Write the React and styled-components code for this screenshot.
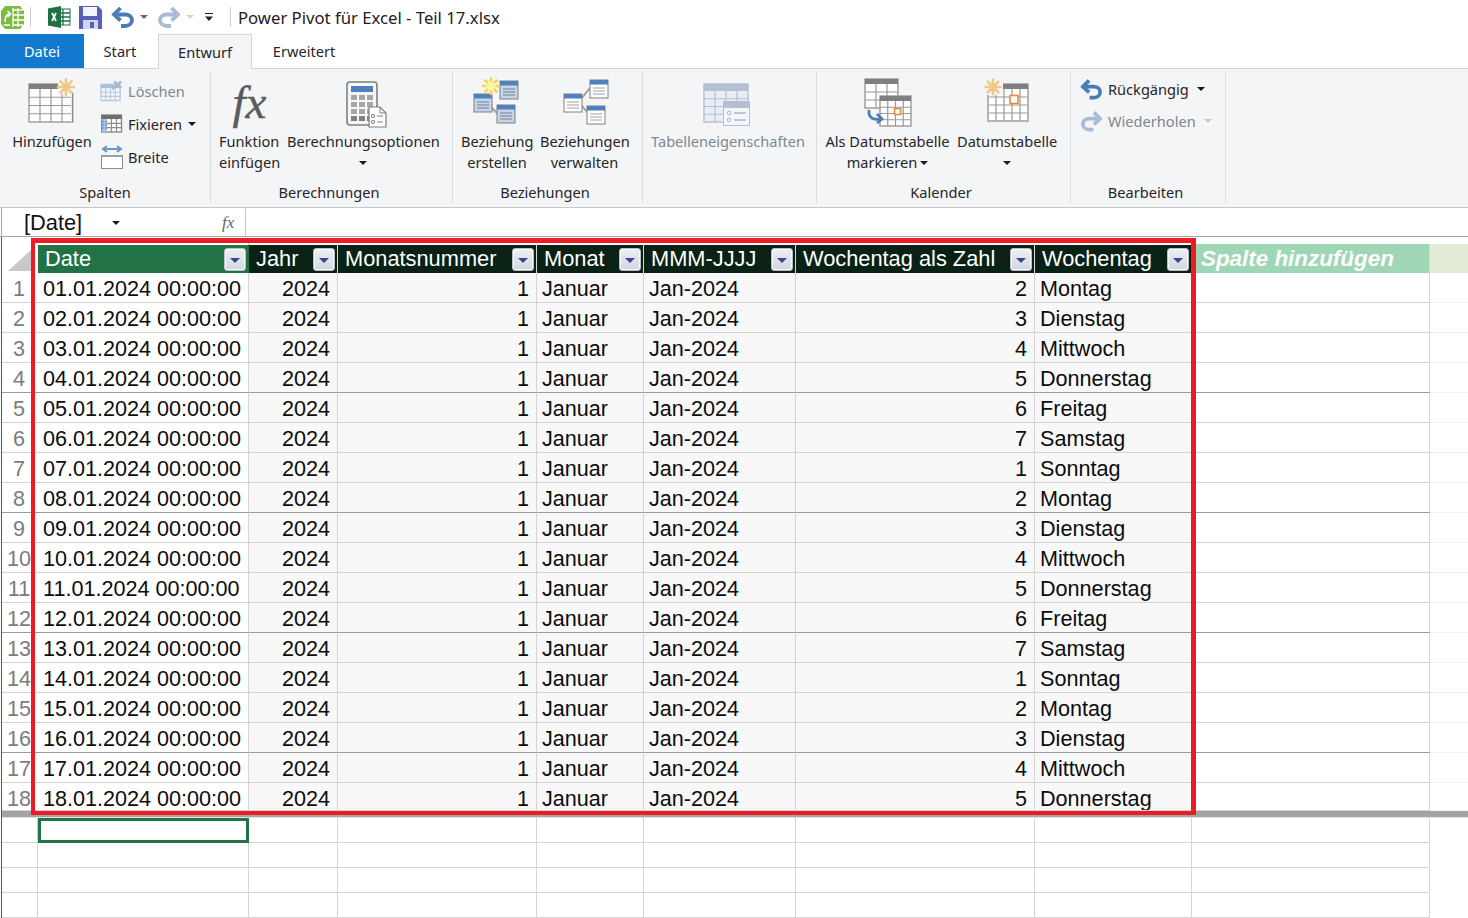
import React from 'react';
import styled, { createGlobalStyle } from 'styled-components';

const Global = createGlobalStyle`
  html, body { margin: 0; padding: 0; background: #fff; overflow: hidden; }
  * { box-sizing: border-box; }
`;
const UI = `"Noto Sans", "Open Sans", sans-serif`;
const GRID = `"Liberation Sans", Arial, sans-serif`;
const COLS = '36px 211px 89px 199px 107px 152px 239px 157px 238px 1fr';

const Page = styled.div`position: relative; width: 1468px; height: 918px; overflow: hidden; background: #fff; font-family: ${UI}; color: #262626;`;

const TitleBar = styled.div`height: 34px; display: flex; align-items: center;`;
const QatIcon = styled.span`display: flex; align-items: center; justify-content: center; width: ${p => p.$w}px; height: 34px; margin-left: ${p => p.$ml || 0}px;`;
const QatSep = styled.span`width: 1px; height: 20px; background: #d0d0d0; margin-left: ${p => p.$ml}px;`;
const Title = styled.span`font-size: 16.7px; margin-left: 7px; white-space: nowrap; color: #222;`;

const Tabs = styled.div`height: 35px; display: flex; border-bottom: 1px solid #d4d4d4;`;
const FileTab = styled.div`width: 84px; height: 34px; background: #1279ce; color: #fff; font-size: 14.6px; display: flex; align-items: center; justify-content: center;`;
const Tab = styled.div`
  width: ${p => p.$w}px; height: 35px; font-size: 14.6px; display: flex; align-items: center; justify-content: center; padding: 0 ${p => p.$pr || 0}px 1px 0;
  ${p => p.$active && 'background: #f4f5f7; border: 1px solid #d4d4d4; border-bottom: none;'}
`;

const Ribbon = styled.div`height: 139px; background: #f4f5f7; display: flex; padding-top: 3px; border-bottom: 1px solid #c8c8c8;`;
const Group = styled.div`
  width: ${p => p.$w}px; height: 131px; flex: none; border-right: 1px solid #dcdde0; display: flex; flex-direction: column;
`;
const GroupBody = styled.div`height: 109px; display: flex; gap: ${p => p.$gap ?? 7}px; padding-left: ${p => p.$pl ?? 8}px; padding-top: 3px;`;
const GroupLabel = styled.div`height: 22px; line-height: 22px; font-size: 14.6px; text-align: center; padding-right: ${p => p.$pr ?? 5}px; white-space: nowrap;`;
const BigBtn = styled.div`width: ${p => p.$w}px; flex: none; display: flex; flex-direction: column; align-items: stretch; color: ${p => p.$off ? '#80878f' : '#262626'};`;
const BigIcon = styled.div`height: 56px; display: flex; align-items: flex-start; justify-content: center; padding-left: ${p => p.$pl || 0}px; padding-top: ${p => p.$pt || 0}px;`;
const BigText = styled.div`font-size: 14.6px; line-height: 21px; text-align: ${p => p.$left ? 'left' : 'center'}; white-space: nowrap; `;
const SmallCol = styled.div`display: flex; flex-direction: column; margin-left: ${p => p.$ml || 0}px; margin-top: ${p => p.$mt || 0}px;`;
const SmallBtn = styled.div`height: ${p => p.$h || 33}px; display: flex; align-items: center; gap: 5px; font-size: 14.6px; white-space: nowrap; color: ${p => p.$off ? '#80878f' : '#262626'};`;
const SmallIcon = styled.span`width: 23px; height: 24px; display: flex; align-items: center; justify-content: center;`;
const Caret = styled.span`
  display: inline-block; width: 0; height: 0; margin-left: ${p => p.$ml ?? 0}px; vertical-align: 3px;
  border-left: 4px solid transparent; border-right: 4px solid transparent; border-top: 4px solid ${p => p.$off ? '#c4c8cc' : '#1a1a1a'};
`;
const FxGlyph = styled.span`font-family: "Liberation Serif", serif; font-style: italic; font-size: 47px; line-height: 44px; color: #5a5a5a; letter-spacing: 0; -webkit-text-stroke: .4px #5a5a5a;`;

const FormulaBar = styled.div`height: 29px; display: flex; border-bottom: 1px solid #a6a6a6;`;
const NameBox = styled.div`
  width: 245px; margin-left: 1px; border-left: 1px solid #a6a6a6; border-right: 1px solid #c6c6c6; display: flex; align-items: center;
  font-family: ${GRID}; font-size: 21.8px; color: #111; padding: 1px 0 0 22px; position: relative;
`;
const NameText = styled.span`width: 88px;`;
const FxSmall = styled.span`font-family: "Liberation Serif", serif; font-style: italic; font-size: 17px; color: #666; margin-left: 102px;`;

const Sheet = styled.div`margin-left: 1px; border-left: 1px solid #217346; padding-top: 7px; height: 681px; font-family: ${GRID}; font-size: 21.6px; color: #0c0c0c;`;
const HeadRow = styled.div`display: grid; grid-template-columns: ${COLS}; height: 29px; font-size: 21.8px;`;
const Corner = styled.div`display: flex; align-items: flex-end; justify-content: flex-end; padding: 0 6px 2px 0;`;
const HeadCell = styled.div`
  background: ${p => p.$bg}; color: #fff; border-right: 1px solid ${p => p.$line || '#d9d9d9'}; border-top: 1px solid #fff;
  display: flex; align-items: center; justify-content: space-between; padding: 0 2px 0 7px; white-space: nowrap; overflow: hidden;
`;
const FilterBtn = styled.span`
  width: 22px; height: 23px; flex: none; border: 1px solid #b9bcc6; border-radius: 3px; display: flex; align-items: center; justify-content: center;
  background: linear-gradient(#eef0f6, #d3d6e2); box-shadow: inset 0 0 0 1px #f6f7fb;
  &::after { content: ''; margin-top: 2px; border-left: 5px solid transparent; border-right: 5px solid transparent; border-top: 5px solid #3a458f; }
`;
const AddCell = styled.div`
  background: #9fd6b5; color: #fff; font-style: italic; font-weight: bold; font-size: 22.4px; padding-left: 9px; line-height: 29px; border-right: 1px solid #d4d4d4; white-space: nowrap;
`;
const RestHead = styled.div`background: #e4ecd9;`;
const Row = styled.div`display: grid; grid-template-columns: ${COLS}; grid-template-rows: ${p => p.$h}px; height: ${p => p.$h}px; line-height: 31px;`;
const Num = styled.div`color: #7c7c7c; text-align: center; padding-right: 2px; border-bottom: 1px solid ${p => p.$line}; white-space: nowrap; overflow: hidden;`;
const Cell = styled.div`
  background: ${p => p.$white ? '#fff' : '#f8f8f8'}; text-align: ${p => p.$right ? 'right' : 'left'};
  padding: 0 7px 0 5px; border-right: 1px solid #d4d4d4; border-bottom: 1px solid ${p => p.$line}; white-space: nowrap; overflow: hidden;
`;
const Blank = styled.div`border-right: 1px solid #d4d4d4; border-bottom: 1px solid ${p => p.$line};`;
const NoLine = styled.div``;
const FaintCell = styled.div`border-bottom: 1px solid #f3f3f3;`;
const Strip = styled.div`height: 7px; background: #a3a3a3; border-bottom: 1px solid #e4e4e4;`;
const EmptyRow = styled.div`display: grid; grid-template-columns: ${COLS}; grid-template-rows: 25px; height: 25px;`;
const EmptyCell = styled.div`
  border-right: 1px solid #d4d4d4; border-bottom: 1px solid #d4d4d4;
  ${p => p.$sel && 'border: 3px solid #217346;'}
`;
const RedBox = styled.div`position: absolute; left: 31px; top: 238px; width: 1165px; height: 577px; border: 5px solid #ed1c24; border-width: 5px 5px 4px 4px; pointer-events: none;`;

/* ---------- icons ---------- */
const Star = ({ cx, cy, r = 9, c = '#f0c88a' }) => (
  <g stroke={c} strokeWidth="2.6" strokeLinecap="round">
    <path d={`M${cx - r} ${cy}H${cx + r}M${cx} ${cy - r}V${cy + r}M${cx - r * .7} ${cy - r * .7}L${cx + r * .7} ${cy + r * .7}M${cx - r * .7} ${cy + r * .7}L${cx + r * .7} ${cy - r * .7}`} />
  </g>
);
const TableGrid = ({ x, y, w, h, cols, rows, head = '#7f7f7f', line = '#9a9a9a', fill = '#fff', hh = 5 }) => {
  const cw = w / cols; const rh = (h - hh) / rows;
  let d = '';
  for (let i = 1; i < cols; i++) d += `M${x + i * cw} ${y + hh}V${y + h}`;
  for (let i = 1; i < rows; i++) d += `M${x} ${y + hh + i * rh}H${x + w}`;
  return (
    <g>
      <rect x={x} y={y} width={w} height={h} fill={fill} stroke={line} strokeWidth="1.4" />
      <rect x={x} y={y} width={w} height={hh} fill={head} />
      <path d={d} stroke={line} strokeWidth="1.2" fill="none" />
    </g>
  );
};
const IconAdd = () => (
  <svg width="50" height="46" viewBox="0 0 50 46">
    <TableGrid x={2} y={6} w={44} h={38} cols={4} rows={4} />
    <rect x="31" y="0" width="17" height="16" fill="#f4f5f7" />
    <rect x="44" y="16" width="2.5" height="28" fill="#fff" />
    <path d="M45.5 14V44" stroke="#8c8c8c" strokeWidth="1.4" />
    <Star cx={39} cy={9} r={8} />
  </svg>
);
const IconDelete = () => (
  <svg width="24" height="22" viewBox="0 0 24 22">
    <TableGrid x={1} y={4} w={20} h={17} cols={4} rows={3} head="#a9c0dc" line="#b9cbe0" fill="#f3f6fa" hh={4} />
    <path d="M13 9L22 1M15 1l7 7" stroke="#a9b6c8" strokeWidth="2.4" />
  </svg>
);
const IconFreeze = () => (
  <svg width="22" height="20" viewBox="0 0 22 20">
    <TableGrid x={0.5} y={1} w={20} h={17} cols={4} rows={3} head="#6f6f6f" hh={4} line="#8c8c8c" />
    <rect x="1" y="5" width="5" height="13" fill="#a9c4e2" />
    <path d="M1 8h5M1 11h5M1 14h5" stroke="#4a7db5" strokeDasharray="2 1" />
  </svg>
);
const IconWidth = () => (
  <svg width="22" height="24" viewBox="0 0 22 24">
    <path d="M2 4H20M6 1L2 4l4 3M16 1l4 3-4 3" fill="none" stroke="#6c98c4" strokeWidth="2" />
    <rect x="0.5" y="11.5" width="21" height="12" fill="#fff" stroke="#8c8c8c" />
    <rect x="0" y="10" width="22" height="2" fill="#a0a0a0" />
  </svg>
);
const IconCalc = () => (
  <svg width="42" height="48" viewBox="0 0 42 48">
    <rect x="1" y="1" width="30" height="43" rx="3" fill="#f7f7f7" stroke="#7f7f7f" strokeWidth="1.6" />
    <rect x="5" y="5" width="22" height="6" fill="#4f81bd" />
    {[0, 1, 2, 3].flatMap(r => [0, 1, 2].map(c => <rect key={`${r}${c}`} x={5 + c * 8} y={14 + r * 7} width="6" height="5" fill={r === 3 ? '#7f7f7f' : '#a6a6a6'} />))}
    <path d="M23 26h11l6 6v14H23z" fill="#fff" stroke="#7f7f7f" strokeWidth="1.2" />
    <path d="M34 26v6h6" fill="none" stroke="#7f7f7f" />
    <circle cx="27" cy="35" r="1.6" fill="none" stroke="#7f7f7f" /><circle cx="27" cy="41" r="1.6" fill="none" stroke="#7f7f7f" />
    <path d="M31 35h6M31 41h6" stroke="#7f7f7f" />
  </svg>
);
const MiniTable = ({ x, y, w = 18, h = 18, head = '#4f81bd', body = '#fff', line = '#808080', glow }) => (
  <g>
    <rect x={x} y={y} width={w} height={h} fill={glow ? '#c6d4e8' : body} stroke={line} />
    <rect x={x} y={y} width={w} height="4.5" fill={head} />
    <path d={`M${x + 3} ${y + 8}H${x + w - 3}M${x + 3} ${y + 11}H${x + w - 3}M${x + 3} ${y + 14}H${x + w - 3}`} stroke={glow ? '#6f7f95' : '#a0a0a0'} />
  </g>
);
const IconRelNew = () => (
  <svg width="48" height="48" viewBox="0 0 48 48">
    <path d="M18 30L28 40" stroke="#a0a0a0" strokeWidth="2" />
    <MiniTable x={27} y={4} glow />
    <MiniTable x={1} y={17} glow />
    <MiniTable x={24} y={28} glow />
    <g><Star cx={18} cy={9} r={8} c="#f7d54a" /><circle cx="18" cy="9" r="4.5" fill="#fff3a8" /></g>
  </svg>
);
const IconRelManage = () => (
  <svg width="46" height="46" viewBox="0 0 46 46">
    <path d="M18 20L27 9M18 26L27 36" stroke="#909090" strokeWidth="1.6" />
    <MiniTable x={27} y={1} />
    <MiniTable x={1} y={15} />
    <MiniTable x={24} y={27} />
  </svg>
);
const IconTableProps = () => (
  <svg width="48" height="44" viewBox="0 0 48 44">
    <TableGrid x={1} y={1} w={44} h={38} cols={4} rows={4} head="#b4bfd2" line="#b4bfd2" fill="#e9eef6" hh={7} />
    <rect x="20.5" y="18.5" width="26" height="24" fill="#f4f6fa" stroke="#b4bfd2" />
    <rect x="20" y="18" width="27" height="7" fill="#b4bfd2" />
    <circle cx="26" cy="30" r="1.8" fill="none" stroke="#a9b6cc" /><circle cx="26" cy="37" r="1.8" fill="none" stroke="#a9b6cc" />
    <path d="M31 30h12M31 37h12" stroke="#a9b6cc" strokeWidth="1.3" />
  </svg>
);
const IconMark = () => (
  <svg width="50" height="50" viewBox="0 0 50 50">
    <TableGrid x={1} y={1} w={33} h={29} cols={3} rows={3} />
    <TableGrid x={16} y={18} w={31} h={30} cols={4} rows={4} />
    <rect x="30.5" y="30.5" width="6" height="6" fill="#fff" stroke="#ed8a3d" strokeWidth="1.6" />
    <path d="M5 32c-1 9 6 10 11 9" fill="none" stroke="#4a7db5" strokeWidth="2.8" />
    <path d="M13 36l5 5-5 4" fill="none" stroke="#4a7db5" strokeWidth="2.8" />
  </svg>
);
const IconDateTable = () => (
  <svg width="46" height="44" viewBox="0 0 46 44">
    <TableGrid x={4} y={6} w={40} h={37} cols={5} rows={4} head="#7f7f7f" />
    <rect x="0" y="0" width="19" height="17" fill="#f4f5f7" />
    <rect x="26" y="17.5" width="8" height="8" fill="#fff" stroke="#ed8a3d" strokeWidth="1.6" />
    <Star cx={9} cy={9} r={7.5} />
  </svg>
);
const IconUndo = ({ c = '#4a7db5', flip, size = 24 }) => (
  <svg width={size} height={size - 2} viewBox="0 0 24 22" style={flip ? { transform: 'scaleX(-1)' } : undefined}>
    <path d="M9.5 2L3 8.5 9.5 14.5" fill="none" stroke={c} strokeWidth="3.8" />
    <path d="M4 8.5H14c4 0 7 2 7 5.5s-3 6-7 6H10" fill="none" stroke={c} strokeWidth="3.8" />
  </svg>
);
const IconPivot = () => (
  <svg width="25" height="25" viewBox="0 0 25 25">
    <path d="M5 1h15l4 5v13l-4 5H5l-4-5V6z" fill="#7ebc3f" />
    <path d="M13 5h10M13 10h11M13 15h11M13 20h10M18 3v19M13 3v19" stroke="#fff" strokeWidth="1.3" />
    <path d="M5 17c0-5 1-8 5-8M7.5 6l3 3-3 3M4 20h6" fill="none" stroke="#fff" strokeWidth="1.5" />
  </svg>
);
const IconExcel = () => (
  <svg width="24" height="22" viewBox="0 0 24 22">
    <rect x="10" y="3" width="13" height="16" fill="#fff" stroke="#1e7145" />
    <path d="M10 7h13M10 11h13M10 15h13M16 3v16" stroke="#1e7145" strokeWidth="1.3" />
    <path d="M1 2.5L14 0v22L1 19.5z" fill="#1e7145" />
    <path d="M5 7l4 8M9 7l-4 8" stroke="#fff" strokeWidth="1.7" />
  </svg>
);
const IconSave = () => (
  <svg width="23" height="23" viewBox="0 0 23 23">
    <path d="M0 0h19l4 4v19H0z" fill="#5760b8" />
    <rect x="4" y="1" width="14" height="9" fill="#f2f4fb" />
    <rect x="4" y="14" width="15" height="9" fill="#d3d6e8" />
    <rect x="11" y="16" width="4" height="6" fill="#5760b8" />
  </svg>
);
const Mini = styled.span`
  display: block; width: 0; height: 0; border-left: 4px solid transparent; border-right: 4px solid transparent; border-top: 4px solid ${p => p.$c};
`;
const Custom = () => (
  <svg width="10" height="9" viewBox="0 0 10 9"><path d="M1 0.5H9" stroke="#222" /><path d="M1 3.5H9L5 8z" fill="#222" /></svg>
);
const Corn = () => (<svg width="24" height="22" viewBox="0 0 24 22"><path d="M0 22L24 0V22z" fill="#c8c8c8" /></svg>);

/* ---------- data ---------- */
const DAYS = ['Sonntag', 'Montag', 'Dienstag', 'Mittwoch', 'Donnerstag', 'Freitag', 'Samstag'];
const HEADERS = [
  ['Date', '#217346', '#217346'], ['Jahr', '#0a2215'], ['Monatsnummer', '#0a2215'], ['Monat', '#0a2215'],
  ['MMM-JJJJ', '#0a2215'], ['Wochentag als Zahl', '#0a2215'], ['Wochentag', '#0a2215'],
];
const rows = Array.from({ length: 18 }, (_, i) => {
  const d = i + 1; const wd = (i + 1) % 7; // Jan 1 2024 = Monday
  return { n: d, date: `${String(d).padStart(2, '0')}.01.2024 00:00:00`, wnum: wd + 1, wname: DAYS[wd] };
});

export default function App() {
  return (
    <Page>
      <Global />
      <TitleBar>
        <QatIcon $w={25}><IconPivot /></QatIcon>
        <QatSep $ml={5} />
        <QatIcon $w={24} $ml={16}><IconExcel /></QatIcon>
        <QatIcon $w={24} $ml={7}><IconSave /></QatIcon>
        <QatIcon $w={24} $ml={9}><IconUndo /></QatIcon>
        <QatIcon $w={8} $ml={5}><Mini $c="#6a6a6a" /></QatIcon>
        <QatIcon $w={24} $ml={9}><IconUndo c="#a9bcd6" flip /></QatIcon>
        <QatIcon $w={8} $ml={5}><Mini $c="#d4d4d4" /></QatIcon>
        <QatIcon $w={10} $ml={10}><Custom /></QatIcon>
        <QatSep $ml={16} />
        <Title>Power Pivot für Excel - Teil 17.xlsx</Title>
      </TitleBar>

      <Tabs>
        <FileTab>Datei</FileTab>
        <Tab $w={74} $pr={2}>Start</Tab>
        <Tab $w={94} $active>Entwurf</Tab>
        <Tab $w={104}>Erweitert</Tab>
      </Tabs>

      <Ribbon>
        <Group $w={211}>
          <GroupBody $pl={12} $gap={0}>
            <BigBtn $w={80}>
              <BigIcon $pt={3}><IconAdd /></BigIcon>
              <BigText>Hinzufügen</BigText>
            </BigBtn>
            <SmallCol $ml={8} $mt={-1}>
              <SmallBtn $off><SmallIcon><IconDelete /></SmallIcon>Löschen</SmallBtn>
              <SmallBtn><SmallIcon><IconFreeze /></SmallIcon>Fixieren<Caret $ml={1} /></SmallBtn>
              <SmallBtn><SmallIcon><IconWidth /></SmallIcon>Breite</SmallBtn>
            </SmallCol>
          </GroupBody>
          <GroupLabel $pr={0}>Spalten</GroupLabel>
        </Group>

        <Group $w={242}>
          <GroupBody>
            <BigBtn $w={61}>
              <BigIcon $pt={5}><FxGlyph>fx</FxGlyph></BigIcon>
              <BigText $left>Funktion<br />einfügen</BigText>
            </BigBtn>
            <BigBtn $w={152}>
              <BigIcon $pl={8} $pt={6}><IconCalc /></BigIcon>
              <BigText>Berechnungsoptionen<br /><Caret /></BigText>
            </BigBtn>
          </GroupBody>
          <GroupLabel>Berechnungen</GroupLabel>
        </Group>

        <Group $w={190}>
          <GroupBody>
            <BigBtn $w={72}>
              <BigIcon $pt={2}><IconRelNew /></BigIcon>
              <BigText>Beziehung<br />erstellen</BigText>
            </BigBtn>
            <BigBtn $w={89}>
              <BigIcon $pt={4} $pl={2}><IconRelManage /></BigIcon>
              <BigText>Beziehungen<br />verwalten</BigText>
            </BigBtn>
          </GroupBody>
          <GroupLabel>Beziehungen</GroupLabel>
        </Group>

        <Group $w={174}>
          <GroupBody>
            <BigBtn $w={152} $off>
              <BigIcon $pt={8}><IconTableProps /></BigIcon>
              <BigText>Tabelleneigenschaften</BigText>
            </BigBtn>
          </GroupBody>
          <GroupLabel />
        </Group>

        <Group $w={254}>
          <GroupBody>
            <BigBtn $w={125}>
              <BigIcon $pt={3} $pl={2}><IconMark /></BigIcon>
              <BigText>Als Datumstabelle<br />markieren<Caret $ml={3} /></BigText>
            </BigBtn>
            <BigBtn $w={100}>
              <BigIcon $pt={3}><IconDateTable /></BigIcon>
              <BigText>Datumstabelle<br /><Caret /></BigText>
            </BigBtn>
          </GroupBody>
          <GroupLabel>Kalender</GroupLabel>
        </Group>

        <Group $w={155}>
          <GroupBody $pl={9} $gap={0}>
            <SmallCol $mt={-2}>
              <SmallBtn $h={32}><SmallIcon><IconUndo /></SmallIcon>Rückgängig<Caret $ml={3} /></SmallBtn>
              <SmallBtn $h={32} $off><SmallIcon><IconUndo c="#a9bcd6" flip /></SmallIcon>Wiederholen<Caret $ml={3} $off /></SmallBtn>
            </SmallCol>
          </GroupBody>
          <GroupLabel>Bearbeiten</GroupLabel>
        </Group>
      </Ribbon>

      <FormulaBar>
        <NameBox>
          <NameText>[Date]</NameText>
          <Caret />
          <FxSmall>fx</FxSmall>
        </NameBox>
      </FormulaBar>

      <Sheet>
        <HeadRow>
          <Corner><Corn /></Corner>
          {HEADERS.map(([label, bg, line]) => (
            <HeadCell key={label} $bg={bg} $line={line}>{label}<FilterBtn /></HeadCell>
          ))}
          <AddCell>Spalte hinzufügen</AddCell>
          <RestHead />
        </HeadRow>
        {rows.map((r, i) => {
          const line = (i + 1) % 4 === 0 ? '#9c9c9c' : '#d4d4d4';
          const last = i === rows.length - 1;
          return (
            <Row key={r.n} $h={last ? 28 : 30}>
              <Num $line={line}>{r.n}</Num>
              <Cell $white $line={line}>{r.date}</Cell>
              <Cell $right $line={line}>2024</Cell>
              <Cell $right $line={line}>1</Cell>
              <Cell $line={line}>Januar</Cell>
              <Cell $line={line}>Jan-2024</Cell>
              <Cell $right $line={line}>{r.wnum}</Cell>
              <Cell $line={line}>{r.wname}</Cell>
              <Blank $line={line} />
              <FaintCell />
            </Row>
          );
        })}
        <Strip />
        {[0, 1, 2, 3].map(i => (
          <EmptyRow key={i}>
            {Array.from({ length: 9 }, (_, c) => <EmptyCell key={c} $sel={i === 0 && c === 1} />)}
            <NoLine />
          </EmptyRow>
        ))}
      </Sheet>
      <RedBox />
    </Page>
  );
}
